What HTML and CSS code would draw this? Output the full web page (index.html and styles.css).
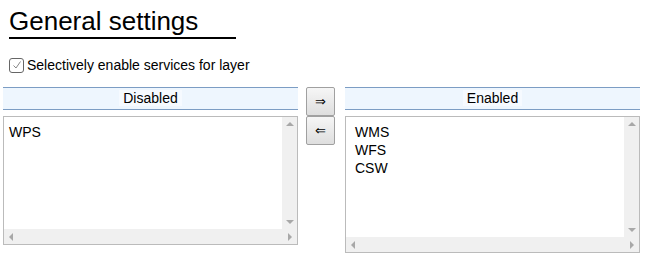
FILE: index.html
```html
<!DOCTYPE html>
<html lang="en">
<head>
    <meta charset="UTF-8">
    <title>General settings</title>
    <link rel="stylesheet" href="styles.css">
</head>
<body>
    <div class="settings">
        <h1 class="title">General settings</h1>

        <label class="check-row">
            <span class="checkbox">
                <svg width="10" height="10" viewBox="0 0 10 10"><path d="M1.5 5.5 L4 8 L8.5 1.5" fill="none" stroke="#888" stroke-width="1"/></svg>
            </span>
            Selectively enable services for layer
        </label>

        <div class="chooser">
            <div class="column">
                <div class="col-header"><span>Disabled</span></div>
                <div class="list list-short">
                    <div class="list-body">
                        <div class="items">
                            <div>WPS</div>
                        </div>
                        <div class="vscroll">
                            <span class="arrow up"></span>
                            <span class="arrow down"></span>
                        </div>
                    </div>
                    <div class="hscroll">
                        <span class="arrow left"></span>
                        <span class="arrow right"></span>
                    </div>
                </div>
            </div>

            <div class="buttons">
                <button class="move-btn">&rArr;</button>
                <button class="move-btn">&lArr;</button>
            </div>

            <div class="column">
                <div class="col-header"><span>Enabled</span></div>
                <div class="list list-tall">
                    <div class="list-body">
                        <div class="items items-enabled">
                            <div>WMS</div>
                            <div>WFS</div>
                            <div>CSW</div>
                        </div>
                        <div class="vscroll">
                            <span class="arrow up"></span>
                            <span class="arrow down"></span>
                        </div>
                    </div>
                    <div class="hscroll">
                        <span class="arrow left"></span>
                        <span class="arrow right"></span>
                    </div>
                </div>
            </div>
        </div>
    </div>
</body>
</html>
```

FILE: styles.css
```css
* {
    margin: 0;
    padding: 0;
    box-sizing: border-box;
}

body {
    background-color: white;
    font-family: "Liberation Sans", Arial, sans-serif;
    color: #000;
}

.settings {
    padding: 5px 15px 0 3px;
}

.title {
    display: inline-block;
    margin-left: 6px;
    padding-right: 38px;
    font-size: 26px;
    font-weight: normal;
    line-height: 32px;
    border-bottom: 2px solid #000;
}

.check-row {
    display: flex;
    align-items: center;
    margin: 16px 0 0 6px;
    font-size: 14px;
    height: 20px;
}

.checkbox {
    display: inline-flex;
    align-items: center;
    justify-content: center;
    width: 15px;
    height: 15px;
    margin-right: 3px;
    border: 1px solid #666;
    border-radius: 3px;
}

.chooser {
    display: flex;
    align-items: flex-start;
    margin-top: 12px;
}

.column {
    width: 295px;
}

.col-header {
    height: 23px;
    background-color: #eef6fe;
    border-top: 1px solid #7c9dc4;
    border-bottom: 1px solid #7c9dc4;
    text-align: center;
    font-size: 14px;
    line-height: 21px;
}

.col-header span {
    background-color: #f6faff;
    padding: 0 4px;
}

.list {
    margin-top: 6px;
    border: 1px solid #bbb;
    display: flex;
    flex-direction: column;
}

.list-short {
    height: 129px;
}

.list-tall {
    height: 137px;
}

.list-body {
    flex: 1;
    display: flex;
}

.items {
    flex: 1;
    padding: 6px 5px;
    font-size: 14px;
    line-height: 18px;
}

.items-enabled {
    padding: 6px 9px;
}

.vscroll {
    width: 15px;
    background-color: #f0f0f0;
    display: flex;
    flex-direction: column;
    justify-content: space-between;
    align-items: center;
    padding: 5px 0;
}

.hscroll {
    height: 15px;
    background-color: #f0f0f0;
    display: flex;
    justify-content: space-between;
    align-items: center;
    padding: 0 5px;
}

.arrow {
    width: 0;
    height: 0;
    border: 4px solid transparent;
}

.arrow.up {
    border-top: none;
    border-bottom: 4px solid #a8a8a8;
}

.arrow.down {
    border-bottom: none;
    border-top: 4px solid #a8a8a8;
}

.arrow.left {
    border-left: none;
    border-right: 4px solid #a8a8a8;
}

.arrow.right {
    border-right: none;
    border-left: 4px solid #a8a8a8;
}

.buttons {
    display: flex;
    flex-direction: column;
    margin: 0 10px 0 8px;
}

.move-btn {
    width: 29px;
    height: 29px;
    background: linear-gradient(#f6f6f6, #dedede);
    border: 1px solid #a0a0a0;
    border-radius: 2px;
    font-family: "DejaVu Sans", sans-serif;
    font-size: 13px;
    color: #000;
}
```
